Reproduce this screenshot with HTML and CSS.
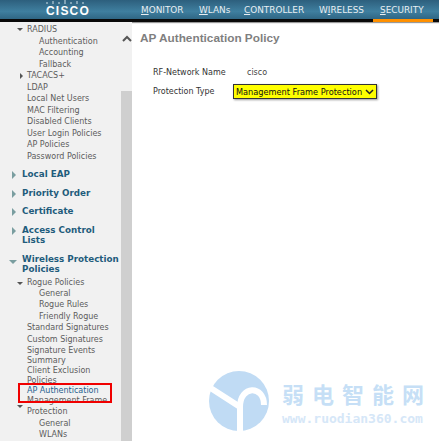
FILE: index.html
```html
<!DOCTYPE html>
<html lang="en">
<head>
    <meta charset="UTF-8">
    <title>AP Authentication Policy</title>
    <link rel="stylesheet" href="styles.css">
</head>
<body>
    <header class="topbar">
        <div class="logo">
            <svg class="logo-dots" width="44" height="4" viewBox="0 0 44 4"><path d="M2 2v2M8 1v3M14 2v2M20 0v4M26 2v2M32 1v3M38 2v2" stroke="#cfe0e8" stroke-width="1"/></svg>
            <span class="logo-text">CISCO</span>
        </div>
        <nav class="nav">
            <a class="nav-item nav-monitor"><u>M</u>ONITOR</a>
            <a class="nav-item nav-wlans"><u>W</u>LANs</a>
            <a class="nav-item nav-controller"><u>C</u>ONTROLLER</a>
            <a class="nav-item nav-wireless">W<u>I</u>RELESS</a>
            <a class="nav-item nav-security active"><u>S</u>ECURITY</a>
        </nav>
    </header>
    <div class="main">
        <aside class="sidebar">
            <div class="row l1 open">RADIUS</div>
            <div class="row l2">Authentication</div>
            <div class="row l2">Accounting</div>
            <div class="row l2">Fallback</div>
            <div class="row l1 closed">TACACS+</div>
            <div class="row l1">LDAP</div>
            <div class="row l1">Local Net Users</div>
            <div class="row l1">MAC Filtering</div>
            <div class="row l1">Disabled Clients</div>
            <div class="row l1">User Login Policies</div>
            <div class="row l1">AP Policies</div>
            <div class="row l1">Password Policies</div>
            <div class="section first closed">Local EAP</div>
            <div class="section closed">Priority Order</div>
            <div class="section closed">Certificate</div>
            <div class="section closed">Access Control<br>Lists</div>
            <div class="section open">Wireless Protection<br>Policies</div>
            <div class="row l1 h10 open after-section">Rogue Policies</div>
            <div class="row l2">General</div>
            <div class="row l2">Rogue Rules</div>
            <div class="row l2">Friendly Rogue</div>
            <div class="row l1">Standard Signatures</div>
            <div class="row l1">Custom Signatures</div>
            <div class="row l1 h11">Signature Events</div>
            <div class="row l1 h10">Summary</div>
            <div class="row l1 h9">Client Exclusion</div>
            <div class="row l1 h11">Policies</div>
            <div class="row l1 h10 current">AP Authentication</div>
            <div class="row l1 h10">Management Frame</div>
            <div class="row l1 open-low">Protection</div>
            <div class="row l2">General</div>
            <div class="row l2">WLANs</div>
            <div class="red-box"></div>
        </aside>
        <div class="scrollbar">
            <div class="scroll-up"></div>
            <svg class="chevron" width="10" height="7" viewBox="0 0 10 7"><path d="M1 6l4-4 4 4" fill="none" stroke="#555" stroke-width="2"/></svg>
            <div class="scroll-thumb"></div>
        </div>
        <section class="content">
            <h1 class="title">AP Authentication Policy</h1>
            <div class="form-row first-row">
                <label class="field-label">RF-Network Name</label>
                <span class="field-value">cisco</span>
            </div>
            <div class="form-row">
                <label class="field-label" for="ptype">Protection Type</label>
                <div class="select-wrap">
                    <select class="field-select" id="ptype">
                        <option>Management Frame Protection</option>
                    </select>
                    <svg class="select-arrow" width="9" height="6" viewBox="0 0 9 6"><path d="M1 1l3.500 3.500L8 1" fill="none" stroke="#222" stroke-width="1.500"/></svg>
                </div>
            </div>
        </section>
    </div>
    <div class="watermark">
        <svg class="wm-logo" width="60" height="60" viewBox="0 0 60 60">
            <circle cx="30" cy="30" r="30" fill="#c0dbf4"/>
            <path d="M0 16l31 20v24" fill="none" stroke="#fff" stroke-width="6"/>
            <path d="M31 36c0-22 24-22 24-2" fill="none" stroke="#fff" stroke-width="6"/>
        </svg>
        <div class="wm-text">
            <div class="wm-cn">弱电智能网</div>
            <div class="wm-url">www.ruodian360.com</div>
        </div>
    </div>
</body>
</html>
```

FILE: styles.css
```css
html, body {
    margin: 0;
    height: 441px;
    overflow: hidden;
    background-color: #fff;
}
body {
    font-family: "DejaVu Sans", Verdana, sans-serif;
    font-size: 8px;
    position: relative;
}
.topbar {
    height: 19px;
    background: linear-gradient(#2d5f7d, #3f7f9f 60%, #2f6684);
    border-bottom: 3px solid #0a0a0a;
    display: flex;
    box-shadow: 0 1px 1px #999;
}
.logo {
    width: 134px;
    box-sizing: border-box;
    padding-left: 46px;
    position: relative;
}
.logo-dots {
    position: absolute;
    left: 45px;
    top: 0;
}
.logo-text {
    display: block;
    padding-top: 5px;
    font-family: "Liberation Sans", Arial, sans-serif;
    font-weight: bold;
    font-size: 12px;
    line-height: 12px;
    letter-spacing: 1.2px;
    color: #fff;
}
.nav {
    display: flex;
    flex: 1;
    color: #e8eef2;
}
.nav-item {
    display: block;
    height: 19px;
    line-height: 21px;
    padding: 0 7px;
    font-size: 8.9px;
    white-space: nowrap;
}
.nav-monitor { width: 44px; }
.nav-wlans { width: 31px; }
.nav-controller { width: 61px; }
.nav-wireless { width: 47px; }
.nav-security { width: 46px; }
.nav-item.active {
    border-bottom: 3px solid #ff9000;
}
.main {
    display: flex;
    height: 419px;
}
.sidebar {
    width: 121px;
    box-sizing: border-box;
    padding-top: 2px;
    background-color: #f1f1f1;
    color: #5c5c5c;
    position: relative;
    white-space: nowrap;
}
.row {
    position: relative;
    font-size: 8px;
    height: 11.5px;
    line-height: 11.5px;
}
.row.h9 { height: 9px; line-height: 9px; }
.row.h10 { height: 10px; line-height: 10px; }
.row.h11 { height: 11px; line-height: 11px; }
.l1 { padding-left: 27px; }
.l2 { padding-left: 39px; }
.current { color: #1f5f8f; }
.section {
    position: relative;
    padding-left: 22px;
    margin-top: 8px;
    font-weight: bold;
    font-size: 8.75px;
    line-height: 10.5px;
    color: #1f5c7c;
}
.section.first { margin-top: 7px; }
.after-section { margin-top: 3px; }
.row.open::before,
.row.open-low::before {
    content: "";
    position: absolute;
    left: 17px;
    top: 4px;
    border-left: 3px solid transparent;
    border-right: 3px solid transparent;
    border-top: 3px solid #555;
}
.row.open-low::before { top: -1px; }
.row.closed::before {
    content: "";
    position: absolute;
    left: 20px;
    top: 3px;
    border-top: 3px solid transparent;
    border-bottom: 3px solid transparent;
    border-left: 3px solid #555;
}
.section.closed::before {
    content: "";
    position: absolute;
    left: 12px;
    top: 2px;
    border-top: 4px solid transparent;
    border-bottom: 4px solid transparent;
    border-left: 4px solid #7a9ea0;
}
.section.open::before {
    content: "";
    position: absolute;
    left: 9px;
    top: 6px;
    border-left: 4px solid transparent;
    border-right: 4px solid transparent;
    border-top: 4px solid #7a9ea0;
}
.red-box {
    position: absolute;
    left: 18px;
    top: 361px;
    width: 90px;
    height: 16px;
    border: 2px solid #f00000;
}
.scrollbar {
    width: 11px;
    display: flex;
    flex-direction: column;
    position: relative;
}
.scroll-up { height: 69px; background-color: #f1f1f1; }
.scroll-thumb { flex: 1; background-color: #cfcfcf; }
.chevron {
    position: absolute;
    left: 1px;
    top: 13px;
}
.content {
    flex: 1;
    padding-left: 8px;
}
.title {
    margin: 0;
    padding-top: 9px;
    font-family: "Liberation Sans", Arial, sans-serif;
    font-weight: bold;
    font-size: 11.8px;
    line-height: 14px;
    color: #7f7f7f;
}
.form-row {
    display: flex;
    align-items: center;
    height: 19px;
    padding-left: 13px;
    color: #333;
}
.first-row { margin-top: 18px; }
.field-label { width: 94px; }
.field-value { color: #444; }
.select-wrap {
    position: relative;
    margin-left: -14px;
    display: flex;
}
.field-select {
    appearance: none;
    width: 144px;
    height: 15px;
    padding: 0 0 0 2px;
    font-family: "DejaVu Sans", Verdana, sans-serif;
    font-size: 8.2px;
    background-color: #ffff00;
    color: #111;
    border: 1px solid #333;
    border-radius: 0;
    box-shadow: 1px 1px 2px #999;
}
.select-arrow {
    position: absolute;
    right: 3px;
    top: 5px;
}
.watermark {
    position: absolute;
    left: 209px;
    top: 371px;
    display: flex;
    gap: 13px;
}
.wm-cn {
    font-family: "Noto Sans CJK SC", sans-serif;
    font-weight: bold;
    font-size: 22px;
    line-height: 22px;
    letter-spacing: 8px;
    margin-top: 11px;
    color: #c6dff6;
    white-space: nowrap;
}
.wm-url {
    font-family: "DejaVu Sans Mono", monospace;
    font-weight: bold;
    font-size: 13px;
    line-height: 14px;
    margin-top: 8px;
    color: #d6e7f8;
    white-space: nowrap;
}
```
